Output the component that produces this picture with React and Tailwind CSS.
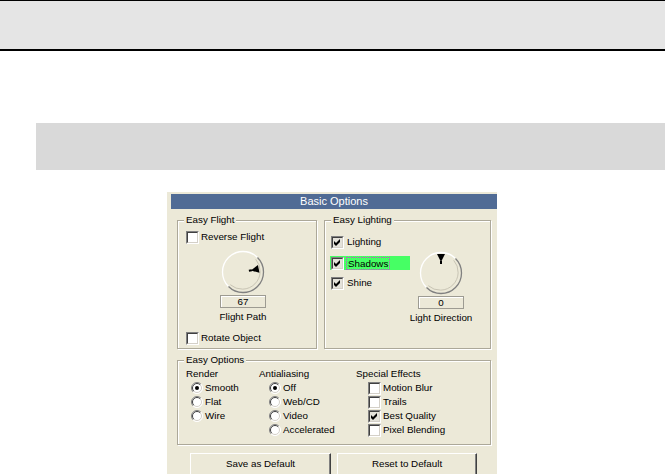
import React from 'react';

// classic win32 style option panel

const CheckBox = ({ checked }) => (
    <span className="block w-[13px] h-[13px] shrink-0 border border-t-[#808080] border-l-[#808080] border-b-white border-r-white">
        <span className={checked
            ? "flex items-center justify-center w-full h-full border border-t-[#404040] border-l-[#404040] border-b-[#d4d0c8] border-r-[#d4d0c8] bg-[#e4e2da]"
            : "flex items-center justify-center w-full h-full border border-t-[#404040] border-l-[#404040] border-b-[#d4d0c8] border-r-[#d4d0c8] bg-white"}>
            {checked && (
                <svg width="7" height="7" viewBox="0 0 7 7">
                    <polygon points="0,2 2,4 6,0 6,3 2,7 0,5" fill="#000" />
                </svg>
            )}
        </span>
    </span>
);

const Radio = ({ on }) => (
    <svg width="12" height="12" viewBox="0 0 12 12" className="shrink-0">
        <circle cx="6" cy="6" r="5.5" fill="#fff" />
        <path d="M2.1 9.9 A5.5 5.5 0 0 1 9.9 2.1" fill="none" stroke="#808080" />
        <path d="M9.9 2.1 A5.5 5.5 0 0 1 2.1 9.9" fill="none" stroke="#fff" />
        <path d="M2.8 9.2 A4.5 4.5 0 0 1 9.2 2.8" fill="none" stroke="#404040" />
        <path d="M9.2 2.8 A4.5 4.5 0 0 1 2.8 9.2" fill="none" stroke="#d4d0c8" />
        {on && <circle cx="6" cy="6" r="2" fill="#000" />}
    </svg>
);

// angle is where the pointer sits; inset pulls it toward the middle
const Dial = ({ angle, inset = 0 }) => (
    <svg width="44" height="44" viewBox="0 0 44 44" className="shrink-0">
        <circle cx="22" cy="22" r="20.5" fill="#ece9d8" />
        <path d="M7.5 36.5 A20.5 20.5 0 0 1 36.5 7.5" fill="none" stroke="#fff" strokeWidth="1.3" />
        <path d="M36.5 7.5 A20.5 20.5 0 0 1 7.5 36.5" fill="none" stroke="#808080" strokeWidth="1.3" />
        <path d="M34.7 9.3 A18 18 0 0 1 9.3 34.7" fill="none" stroke="#c8c4b4" strokeWidth="1" />
        <g transform={`rotate(${angle} 22 22) translate(0 ${inset})`}>
            <polygon points="18,3 26,3 22,11" fill="#000" />
            <rect x="21" y="10" width="2" height="3" fill="#000" />
        </g>
    </svg>
);

const ValueBox = ({ value }) => (
    <div className="w-[46px] h-[13px] border border-[#9d9b92] shadow-[inset_1px_1px_0_#fff] text-center leading-[11px]">{value}</div>
);

const Group = ({ title, className, children }) => (
    <fieldset className={`border border-[#aca899] shadow-[inset_1px_1px_0_#fff,1px_1px_0_#fff] min-w-0 ${className}`}>
        <legend className="ml-[6px] px-[2px] leading-[12px] bg-[#ece9d8]">{title}</legend>
        {children}
    </fieldset>
);

const CheckRow = ({ label, checked, gap = 'gap-[2px]' }) => (
    <div className={`flex items-center h-[14px] ${gap}`}>
        <CheckBox checked={checked} />
        <span className="leading-[12px] whitespace-nowrap">{label}</span>
    </div>
);

const RadioRow = ({ label, on }) => (
    <div className="flex items-center h-[14px] gap-[2px]">
        <Radio on={on} />
        <span className="leading-[12px] whitespace-nowrap">{label}</span>
    </div>
);

const Button = ({ children, width }) => (
    <div className={`${width} h-[23px] border border-t-white border-l-white border-r-[#404040] border-b-[#404040] shadow-[inset_-1px_-1px_0_#808080] pt-[4px] leading-[12px] text-center`}>
        {children}
    </div>
);

export default function App() {
    return (
        <div className="w-[665px] h-[474px] overflow-hidden bg-white text-black font-['Liberation_Sans',Arial,sans-serif] text-[9.8px]">
            <div className="h-[51px] border-t border-b-2 border-black bg-[#e5e5e5]" />
            <div className="mt-[72px] ml-[36px] h-[47px] bg-[#d9d9d9]" />

            <div className="mt-[21px] ml-[166px] w-[331px] bg-[#ece9d8] border-l border-t border-white pl-[4px] pt-[2px] pb-[10px]">
                <div className="h-[15px] bg-[#506b95] text-white text-[11px] leading-[15px] text-center">Basic Options</div>

                <div className="flex mt-[5px] ml-[6px] gap-[7px]">
                    <Group title="Easy Flight" className="w-[140px] h-[135px]">
                        <div className="pl-[8px] pt-[4px]">
                            <CheckRow label="Reverse Flight" />
                            <div className="ml-[34px] mt-[6px] w-[46px] flex flex-col items-center">
                                <Dial angle={79} inset={3} />
                                <div className="mt-[1px]"><ValueBox value="67" /></div>
                                <div className="leading-[12px] mt-[3px] whitespace-nowrap">Flight Path</div>
                            </div>
                            <div className="mt-[8px]"><CheckRow label="Rotate Object" /></div>
                        </div>
                    </Group>

                    <Group title="Easy Lighting" className="w-[167px] h-[135px]">
                        <div className="flex pl-[5px]">
                            <div className="w-[80px] pt-[9px]">
                                <div className="pl-[1px]"><CheckRow label="Lighting" checked gap="gap-[3px]" /></div>
                                <div className="mt-[7px] pl-[1px] bg-[#46ff64] flex items-center h-[14px] gap-[2px]">
                                    <CheckBox checked />
                                    <span className="leading-[11px] px-[1px] border border-dotted border-[#d040d0] whitespace-nowrap">Shadows</span>
                                </div>
                                <div className="mt-[6px] pl-[1px]"><CheckRow label="Shine" checked gap="gap-[3px]" /></div>
                            </div>
                            <div className="ml-[8px] mt-[25px] w-[46px] flex flex-col items-center">
                                <Dial angle={0} />
                                <div className="mt-[1px]"><ValueBox value="0" /></div>
                                <div className="leading-[12px] mt-[3px] whitespace-nowrap">Light Direction</div>
                            </div>
                        </div>
                    </Group>
                </div>

                <div className="mt-[5px] ml-[6px]">
                    <Group title="Easy Options" className="w-[314px] h-[91px]">
                        <div className="flex pl-[8px] pt-[1px]">
                            <div className="w-[73px]">
                                <div className="h-[14px] leading-[14px]">Render</div>
                                <div className="pl-[5px]">
                                    <RadioRow label="Smooth" on />
                                    <RadioRow label="Flat" />
                                    <RadioRow label="Wire" />
                                </div>
                            </div>
                            <div className="w-[97px]">
                                <div className="h-[14px] leading-[14px]">Antialiasing</div>
                                <div className="pl-[10px]">
                                    <RadioRow label="Off" on />
                                    <RadioRow label="Web/CD" />
                                    <RadioRow label="Video" />
                                    <RadioRow label="Accelerated" />
                                </div>
                            </div>
                            <div>
                                <div className="h-[14px] leading-[14px]">Special Effects</div>
                                <div className="pl-[12px]">
                                    <CheckRow label="Motion Blur" />
                                    <CheckRow label="Trails" />
                                    <CheckRow label="Best Quality" checked />
                                    <CheckRow label="Pixel Blending" />
                                </div>
                            </div>
                        </div>
                    </Group>
                </div>

                <div className="flex gap-[6px] ml-[19px] mt-[8px]">
                    <Button width="w-[141px]">Save as Default</Button>
                    <Button width="w-[140px]">Reset to Default</Button>
                </div>
            </div>
        </div>
    );
}
